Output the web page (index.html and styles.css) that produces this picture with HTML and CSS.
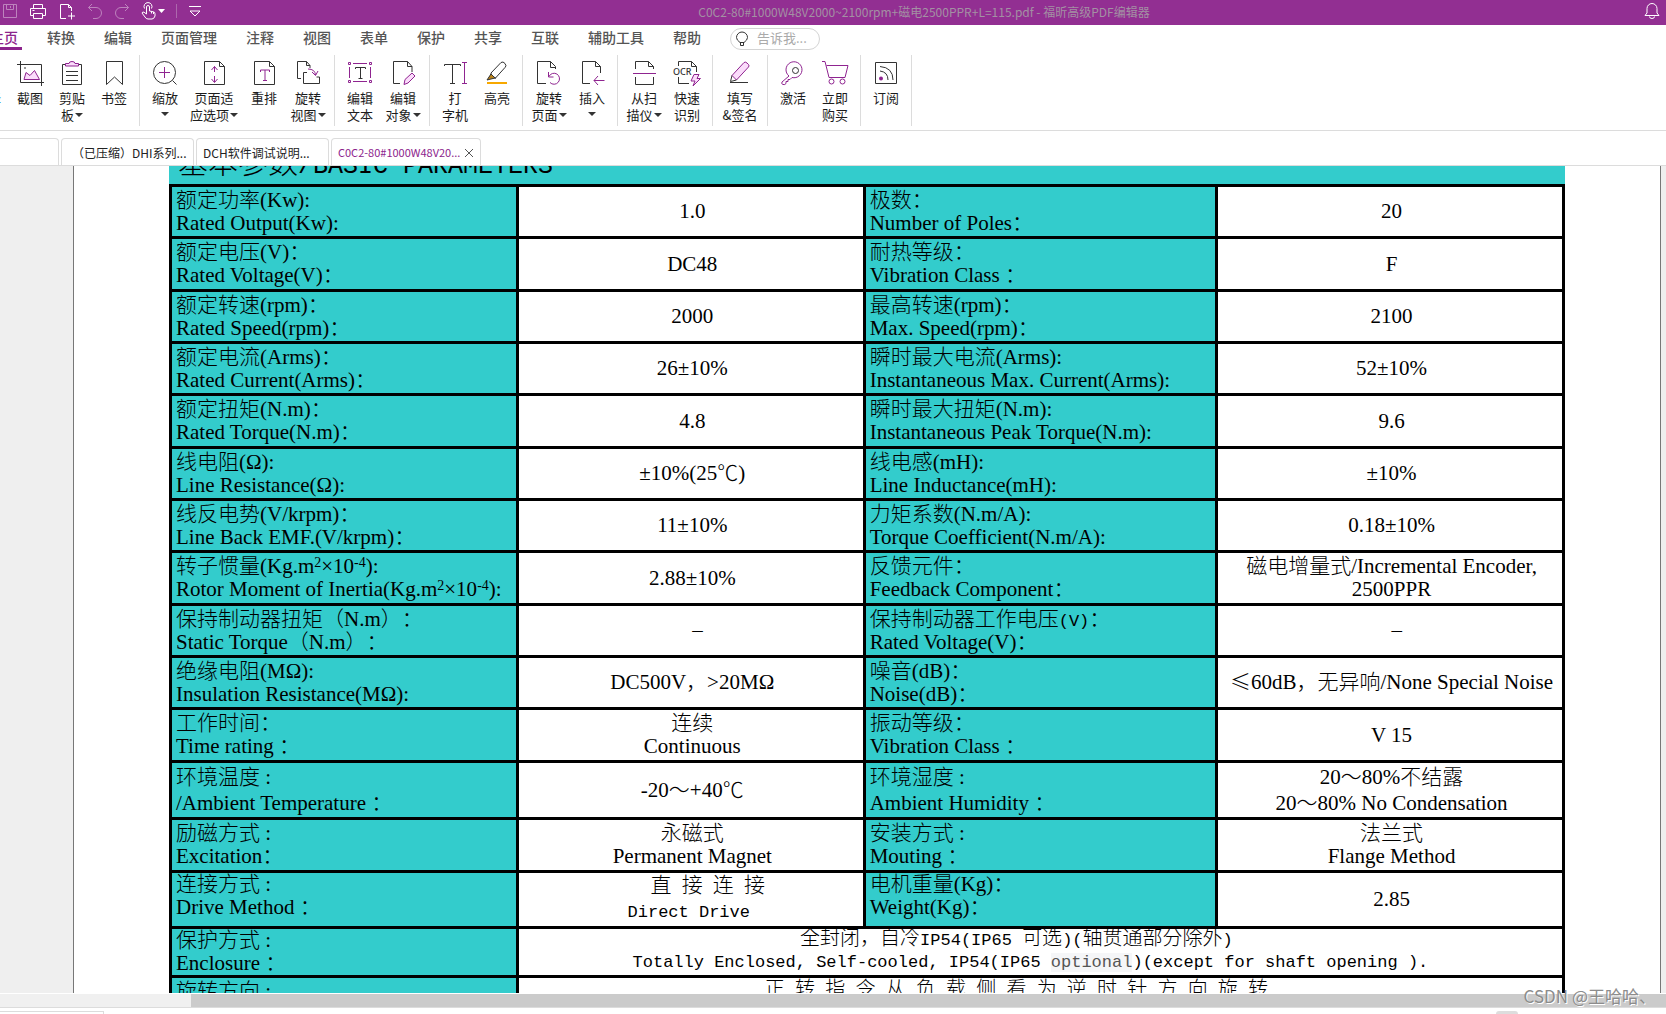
FILE: index.html
```html
<!DOCTYPE html>
<html lang="zh-CN">
<head>
<meta charset="utf-8">
<title>C0C2-80#1000W48V2000~2100rpm+磁电2500PPR+L=115.pdf - 福昕高级PDF编辑器</title>
<link rel="stylesheet" href="styles.css">
</head>
<body>
<header class="titlebar">
  <div class="quick">
    <button class="dim" aria-label="保存"><svg width="16" height="16" viewBox="0 0 16 16"><path d="M1.500 1.500h13v13h-13zM4.500 1.500v5h7v-5M8.500 3v2"/></svg></button>
    <button aria-label="打印"><svg width="18" height="17" viewBox="0 0 18 17"><path d="M4.500 5V1.500h9V5M4.500 12.500h-3V5.500h15v7h-3M4.500 10.500h9v5h-9zM3.500 7.500h2"/></svg></button>
    <button aria-label="新建"><svg width="18" height="17" viewBox="0 0 18 17"><path d="M8 15.500H2.500v-14h8l3 3V8M10.500 1.500v3h3M13.500 9.500v7M10 13h7"/></svg></button>
    <button class="dim" aria-label="撤销"><svg width="16" height="17" viewBox="0 0 16 17"><path d="M5 1L1.500 4.500 5 8M1.500 4.500H9a5 5 0 0 1 0 11H6"/></svg></button>
    <button class="dim" aria-label="重做"><svg width="16" height="17" viewBox="0 0 16 17"><path d="M11 1l3.500 3.500L11 8M14.500 4.500H7a5 5 0 0 0 0 11h3"/></svg></button>
    <button aria-label="手型工具"><svg width="24" height="18" viewBox="0 0 24 18"><path d="M5.500 12V5a1.500 1.500 0 0 1 3 0v4l4 .8q1.500.3 1.500 2V14q-1 3-3 3H7q-2 0-3-2l-3-4q.5-1.500 2-.8L5.500 12M3.500 6.500a4 4 0 1 1 7 0M10.500 9.500v2M12.500 10v2"/><path class="fill" d="M17 7h7l-3.500 4z"/></svg></button>
    <span class="split"></span>
    <button aria-label="自定义"><svg width="14" height="13" viewBox="0 0 14 13"><path d="M1 1.500h12M2 6l5 5 5-5z"/></svg></button>
  </div>
  <h1>C0C2-80#1000W48V2000~2100rpm+磁电2500PPR+L=115.pdf - 福昕高级PDF编辑器</h1>
  <button class="bell" aria-label="通知"><svg width="16" height="17" viewBox="0 0 16 17"><path d="M1 12.500h14l-2-2.500V5.500a5 5 0 0 0-10 0V10zM5.500 13.500a2.500 2 0 0 0 5 0"/></svg></button>
</header>

<nav class="menu">
  <a class="current" href="#">主页</a><a href="#">转换</a><a href="#">编辑</a><a href="#">页面管理</a><a href="#">注释</a><a href="#">视图</a><a href="#">表单</a><a href="#">保护</a><a href="#">共享</a><a href="#">互联</a><a href="#">辅助工具</a><a href="#">帮助</a>
  <label class="search"><svg width="14" height="16" viewBox="0 0 14 16"><path d="M5 11.500Q1.500 9 1.500 6.500a5.500 5.500 0 0 1 11 0Q12.500 9 9 11.500zM5.500 11.500v3h3v-3"/></svg><input type="text" placeholder="告诉我..." aria-label="告诉我"></label>
</nav>

<div class="ribbon">
  <div class="group first">
    <button><svg class="ic"></svg><span class="blue">选择</span></button>
    <button><svg class="ic" viewBox="0 0 28 26"><path d="M1 4.500h24.500V26M4.500 1v21.500H28"/><path class="p f" d="M8 19.500l2-7 4 3 4.500-5 5 9z"/><path d="M8 8h2"/></svg><span>截图</span></button>
    <button><svg class="ic" viewBox="0 0 28 26"><path d="M7 4.500H4.500v20h19v-20H21M8 11.500h12M8 15.500h12M8 20.500h12"/><path class="p f" d="M7.500 6V3.500h3.500q0-2 3-2t3 2h3.500V6z"/></svg><span>剪贴<br>板<i></i></span></button>
    <button><svg class="ic" viewBox="0 0 28 26"><path d="M6.500 1.500h16v23L14.500 17l-8 7.500z"/></svg><span>书签</span></button>
  </div>
  <div class="group">
    <button><svg class="ic" viewBox="0 0 28 26"><circle cx="13.500" cy="12.500" r="11"/><path d="M21.500 20.500l4 4"/><path class="p" d="M8 12.500h11M13.500 7v11"/></svg><span>缩放<br><i class="alone"></i></span></button>
    <button class="w56"><svg class="ic" viewBox="0 0 28 26"><path d="M4.500 1.500h15l5 5v18h-20zM19.500 1.500v5h5"/><path class="p" d="M14.500 12V6.500M11.500 10l3-3.500 3 3.500M14.500 16v6M11.500 19l3 3.500 3-3.500"/></svg><span>页面适<br>应选项<i></i></span></button>
    <button class="w44"><svg class="ic" viewBox="0 0 28 26"><path d="M4.500 1.500h15l5 5v18h-20zM19.500 1.500v5h5"/><path class="p" d="M10.500 12v-2h9v2M15 10v10.500M13 20.500h4"/></svg><span>重排</span></button>
    <button class="w44"><svg class="ic" viewBox="0 0 28 26"><path d="M7 18.500H3.500v-17h9l3.500 4V8M12.500 1.500v4H16M13 12.500H9.500v11h16V17h-3"/><path class="p" d="M14 9q7 0 7.500 6M18 12l3.500 3.500L24 11"/></svg><span>旋转<br>视图<i></i></span></button>
  </div>
  <div class="group">
    <button><svg class="ic" viewBox="0 0 28 26"><path class="p" d="M7 3.500h14M7 21.500h14M3.500 7v11M24.500 7v11M2.500 2.500h2v2h-2zM23.500 2.500h2v2h-2zM2.500 20.500h2v2h-2zM23.500 20.500h2v2h-2z"/><path d="M9.500 9V7.500h10V9M14.500 7.500v11M12.500 18.500h4"/></svg><span>编辑<br>文本</span></button>
    <button class="w44"><svg class="ic" viewBox="0 0 28 26"><path d="M11 23.500H4.500v-22h14l4.500 5V12M18.500 1.500v5H23"/><path class="p f" d="M15 24.500l1-5 7-6.500 3 3-7 7z"/></svg><span>编辑<br>对象<i></i></span></button>
  </div>
  <div class="group">
    <button><svg class="ic" viewBox="0 0 28 26"><path d="M3.500 6V4.500h16V6M11.500 4.500v19M9 23.500h5"/><path class="p" d="M21 2.500h5M21 23.500h5M23.500 2.500v21"/></svg><span>打<br>字机</span></button>
    <button><svg class="ic" viewBox="0 0 28 26"><path d="M8 13L18 2.500q2-1.500 4 1t0 4L12.500 18l-4-1zM7 14l6 4.500"/><path class="gold" d="M4 20l4-6 4 4z"/><path class="under" d="M4 23h20"/></svg><span>高亮</span></button>
  </div>
  <div class="group">
    <button class="w44"><svg class="ic" viewBox="0 0 28 26"><path d="M11 23.500H2.500v-22h13l5 5V9M15.500 1.500v6h5"/><path class="p" d="M13.500 12v5h5M14 16.500a5.500 5.500 0 1 1 1 6"/></svg><span>旋转<br>页面<i></i></span></button>
    <button><svg class="ic" viewBox="0 0 28 26"><path d="M12 23.500H4.500v-22h13l5 5V13M17.500 1.500v5h5"/><path class="p" d="M26.500 20.500H16M20 16l-4 4.500 4 4.500"/></svg><span>插入<br><i class="alone"></i></span></button>
  </div>
  <div class="group">
    <button class="w44"><svg class="ic" viewBox="0 0 28 26"><path d="M5.500 9V1.500h13l5 5V9M18.500 1.500v5h5M5.500 17v7.500h18V17"/><path class="p" d="M3 13.500h23"/></svg><span>从扫<br>描仪<i></i></span></button>
    <button><svg class="ic" viewBox="0 0 28 26"><path d="M5.500 6V1.500h13l5 5V12M18.500 1.500v5h5M5.500 17v6.500H16"/><text x="0" y="15">OCR</text><path class="p f" d="M21 14.500h5l-2 4h3.500L20 26l2-5h-4z"/></svg><span>快速<br>识别</span></button>
  </div>
  <div class="group">
    <button class="w46"><svg class="ic" viewBox="0 0 28 26"><path class="p f" d="M6 15.500L18 2.500q1.500-1 3 .5l1.500 1.500q1 1.500 0 2.500l-12 13z"/><path d="M6 15.500l-1.500 6 6-1.500M4 22.500h18"/></svg><span>填写<br>&amp;签名</span></button>
  </div>
  <div class="group">
    <button><svg class="ic" viewBox="0 0 28 26"><path class="p" d="M10 16L3 22q-1 2 1 2.500t3-1v-2h2v-2h2l2-2a8 8 0 1 0-3-1.500z"/><circle cx="16.500" cy="10.500" r="3"/></svg><span>激活</span></button>
    <button><svg class="ic" viewBox="0 0 28 26"><path class="p" d="M1 1.500h3l4 16h16l3-12H5.500"/><circle class="p" cx="10.500" cy="21.500" r="2.500"/><circle class="p" cx="21.500" cy="21.500" r="2.500"/></svg><span>立即<br>购买</span></button>
  </div>
  <div class="group">
    <button><svg class="ic" viewBox="0 0 28 26"><path d="M3.500 2.500h21v21h-21zM8 6.500q13 1 13 13.500M8 11q8 1 8 9"/><circle class="dot" cx="9" cy="18.500" r="2"/></svg><span>订阅</span></button>
  </div>
</div>

<div class="tabs">
  <a class="tab stub" href="#" aria-label="上一个文档"></a>
  <a class="tab pad" href="#">（已压缩）DHI系列...</a>
  <a class="tab" href="#">DCH软件调试说明...</a>
  <div class="tab active"><a href="#">C0C2-80#1000W48V20...</a><button aria-label="关闭"><svg width="10" height="10" viewBox="0 0 10 10"><path d="M1 1l8 8M9 1L1 9"/></svg></button></div>
</div>

<main class="viewer">
  <article class="page">
    <h2>基本参数<span class="mono">/BASIC PARAMETERS</span></h2>
    <table>
      <colgroup><col class="c1"><col class="c1"><col class="c2"><col class="c1"></colgroup>
      <tbody>
      <tr><th>额定功率(Kw):<br>Rated Output(Kw):</th><td>1.0</td><th>极数：<br>Number of Poles：</th><td>20</td></tr>
      <tr><th>额定电压(V)：<br>Rated Voltage(V)：</th><td>DC48</td><th>耐热等级：<br>Vibration Class ：</th><td>F</td></tr>
      <tr><th>额定转速(rpm)：<br>Rated Speed(rpm)：</th><td>2000</td><th>最高转速(rpm)：<br>Max. Speed(rpm)：</th><td>2100</td></tr>
      <tr><th>额定电流(Arms)：<br>Rated Current(Arms)：</th><td>26±10%</td><th>瞬时最大电流(Arms):<br>Instantaneous Max. Current(Arms):</th><td>52±10%</td></tr>
      <tr><th>额定扭矩(N.m)：<br>Rated Torque(N.m)：</th><td>4.8</td><th>瞬时最大扭矩(N.m):<br>Instantaneous Peak Torque(N.m):</th><td>9.6</td></tr>
      <tr><th>线电阻(Ω):<br>Line Resistance(Ω):</th><td>±10%(25℃)</td><th>线电感(mH):<br>Line Inductance(mH):</th><td>±10%</td></tr>
      <tr><th>线反电势(V/krpm)：<br>Line Back EMF.(V/krpm)：</th><td>11±10%</td><th>力矩系数(N.m/A):<br>Torque Coefficient(N.m/A):</th><td>0.18±10%</td></tr>
      <tr><th>转子惯量(Kg.m<sup>2</sup>×10<sup>-4</sup>):<br>Rotor Moment of Inertia(Kg.m<sup>2</sup>×10<sup>-4</sup>):</th><td>2.88±10%</td><th>反馈元件：<br>Feedback Component：</th><td>磁电增量式/Incremental Encoder,<br>2500PPR</td></tr>
      <tr><th>保持制动器扭矩（N.m）：<br>Static Torque（N.m）：</th><td>&nbsp;&nbsp;–</td><th>保持制动器工作电压<span class="mono">(V)</span>：<br>Rated Voltage(V)：</th><td>&nbsp;&nbsp;–</td></tr>
      <tr><th>绝缘电阻(MΩ):<br>Insulation Resistance(MΩ):</th><td>DC500V，&gt;20MΩ</td><th>噪音(dB)：<br>Noise(dB)：</th><td><b>≤</b>60dB，无异响/None Special Noise</td></tr>
      <tr><th>工作时间：<br>Time rating ：</th><td>连续<br>Continuous</td><th>振动等级：<br>Vibration Class ：</th><td>V 15</td></tr>
      <tr class="loose"><th>环境温度 :<br>/Ambient Temperature ：</th><td>-20～+40℃</td><th>环境湿度 :<br>Ambient Humidity ：</th><td>20～80%不结露<br>20～80% No Condensation</td></tr>
      <tr><th>励磁方式 :<br>Excitation：</th><td>永磁式<br>Permanent Magnet</td><th>安装方式 :<br>Mouting ：</th><td>法兰式<br>Flange Method</td></tr>
      <tr class="drive"><th>连接方式 :<br>Drive Method ：</th><td class="wide"><div class="spaced"><b>直</b> <b>接</b> <b>连</b> <b>接</b></div><div class="mono">Direct Drive</div></td><th>电机重量(Kg)：<br>Weight(Kg)：</th><td>2.85</td></tr>
      <tr class="short"><th>保护方式 :<br>Enclosure ：</th><td class="note" colspan="3"><div class="cn"><b>全封闭，自冷</b>IP54(IP65 <b>可选</b>)(<b>轴贯通部分除外</b>)</div>Totally Enclosed, Self-cooled, IP54(IP65 <span class="faded">optional</span>)(except for shaft opening ).</td></tr>
      <tr><th>旋转方向 :<br>Rotation：</th><td class="note" colspan="3"><div class="cn"><b>正</b> <b>转</b> <b>指</b> <b>令</b> <b>从</b> <b>负</b> <b>载</b> <b>侧</b> <b>看</b> <b>为</b> <b>逆</b> <b>时</b> <b>针</b> <b>方</b> <b>向</b> <b>旋</b> <b>转</b></div>&nbsp;</td></tr>
      </tbody>
    </table>
  </article>
</main>

<footer>
  <div class="scroll"><div class="thumb"></div></div>
  <div class="status"><span class="box"></span><span class="nub"></span></div>
  <div class="watermark">CSDN @王哈哈、</div>
</footer>
</body>
</html>
```
FILE: styles.css
```css
* { box-sizing: border-box; }

body {
  margin: 0;
  height: 100vh;
  display: flex;
  flex-direction: column;
  overflow: hidden;
  background: #fff;
  color: #1c1c1c;
  font: 13px/17px "Noto Sans CJK SC", "Noto Sans", sans-serif;
  text-spacing-trim: space-all;
}

button { border: 0; padding: 0; background: none; font: inherit; color: inherit; }
a { color: inherit; text-decoration: none; }
svg { display: block; fill: none; stroke: currentColor; }

/* title bar */
.titlebar {
  flex: none;
  height: 25px;
  display: grid;
  grid-template-columns: 1fr auto 1fr;
  align-items: center;
  background: #922f92;
  color: #fff;
  padding: 0 6px 3px 2px;
}
.titlebar h1 { margin: 0 0 0 186px; font-size: 12px; font-weight: 400; color: #a391a3; white-space: nowrap; }
.quick { display: flex; align-items: center; gap: 11px; }
.quick .dim { opacity: .4; }
.quick .fill { fill: currentColor; stroke: none; }
.split { width: 1px; height: 14px; background: #ad68ad; }
.bell { justify-self: end; }

/* menu */
.menu { flex: none; height: 29px; display: flex; gap: 29px; margin-left: -10px; font-size: 14px; line-height: 20px; font-weight: 500; color: #555; }
.menu a { flex: none; height: 25px; padding-top: 2px; }
.menu .current { color: #8c238c; border-bottom: 3px solid #8c238c; width: 32px; margin-right: -4px; }
.search { display: flex; align-items: center; gap: 8px; width: 90px; height: 22px; margin-top: 3px; padding: 0 4px; border: 1px solid #d4d4d4; border-radius: 11px; color: #333; }
.search svg { flex: none; }
.search input { width: 56px; border: 0; padding: 0 0 2px; outline: 0; background: none; font: 13px/18px "Noto Sans CJK SC", sans-serif; }
.search input::placeholder { color: #aaa; opacity: 1; }

/* ribbon */
.ribbon { flex: none; height: 77px; display: flex; padding-top: 1px; border-bottom: 1px solid #dcdcdc; }
.group { height: 71px; display: flex; padding: 0 4px; border-right: 1px solid #dcdcdc; }
.group.first { margin-left: -33px; padding-left: 0; }
.group button { width: 42px; display: flex; flex-direction: column; align-items: center; padding-top: 5px; text-align: center; white-space: nowrap; }
.group .w44 { width: 44px; }
.group .w46 { width: 46px; }
.group .w56 { width: 56px; }
.ic { width: 28px; height: 26px; margin-bottom: 3px; overflow: visible; color: #333; }
.ic .p { stroke: #8f2490; }
.ic .f { fill: #fbdcfb; }
.ic .gold { fill: #b98217; }
.ic .under { stroke: #f7a800; stroke-width: 2; }
.ic .dot { fill: #8f2490; stroke: none; }
.ic text { font: 500 9px "Noto Sans", sans-serif; fill: #333; stroke: none; }
.blue { color: #2a8bd6; }
.group i { display: inline-block; border: 4px solid transparent; border-top-color: #333; border-bottom: 0; margin-left: 1px; vertical-align: 3px; }
.group .alone { margin: 0; vertical-align: 4px; }

/* document tabs */
.tabs { flex: none; height: 35px; display: flex; align-items: flex-end; gap: 2px; border-bottom: 1px solid #dcdcdc; }
.tab { width: 133px; height: 27px; padding: 5px 6px 4px; border: 1px solid #dcdcdc; border-bottom: 0; border-radius: 4px 4px 0 0; font-size: 12px; white-space: nowrap; color: #222; }
.tab.stub { width: 63px; margin-left: -4px; }
.tab.pad { padding-left: 10px; }
.tab.active { width: 150px; display: flex; align-items: center; justify-content: space-between; color: #8c238c; font-size: 11px; }
.tab.active button { color: #555; }

/* document */
.viewer { flex: 1; min-height: 0; overflow: hidden; background: #efefef; padding: 0 5px 0 73px; }
.page { border: solid #777; border-width: 0 1px; background: #fff; padding: 0 95px; font: 300 21px/23px "Liberation Serif", "Noto Sans CJK SC", serif; color: #000; }
h2 { margin: -17px 0 0; height: 36px; padding: 0 9px; background: #3cc; font-size: 30px; line-height: 28px; font-weight: 300; white-space: nowrap; overflow: hidden; }
.mono { font-family: "Liberation Mono", monospace; font-size: 17px; }
span.mono { line-height: 1px; }
h2 .mono { font-size: 25px; }
table { width: 100%; margin-top: -1px; table-layout: fixed; border-collapse: collapse; }
.c1 { width: 24.9%; }
.c2 { width: 25.3%; }
tr { height: 52px; }
tr:nth-child(3n+2) { height: 53px; }
tr.loose { height: 57px; line-height: 26px; }
tr.loose + tr { height: 53px; }
tr.drive { height: 56px; }
tr.drive th { vertical-align: top; }
tr.short { height: 49px; }
th, td { border: 3px solid #000; padding: 0; white-space: nowrap; font-weight: 300; text-align: center; }
td { padding-left: 3px; }
th { background: #3cc; text-align: left; padding-left: 4px; }
sup { font-size: 14px; line-height: 0; vertical-align: 6px; }
.wide { padding: 0; line-height: 25px; }
.spaced { padding-left: 34px; font-family: "Liberation Mono", monospace; font-size: 17px; }
div.mono { padding-right: 4px; }
b { font: 300 20px/1px "Noto Sans CJK SC", sans-serif; }
.spaced b, td:last-child:not(.note) b { font-size: 21px; }
.note { padding: 0 20px 0 0; font-family: "Liberation Mono", monospace; font-size: 17px; line-height: 22px; }
.cn { padding-right: 28px; }
.faded { color: #555; background: #f5f6f8; }

/* bottom */
footer { flex: none; position: relative; }
.scroll { height: 14px; margin-top: 1px; background: #f0f0f0; border-bottom: 1px solid #dcdcdc; padding-left: 191px; }
.thumb { height: 13px; background: #cbcbcb; }
.status { height: 6px; display: flex; justify-content: space-between; align-items: flex-end; padding-right: 148px; }
.box { width: 104px; height: 3px; border: 1px solid #dcdcdc; border-width: 1px 1px 0 0; }
.nub { width: 22px; height: 3px; border-radius: 3px 3px 0 0; background: #ddd; }
.watermark { position: absolute; right: 10px; bottom: 8px; font-size: 17px; line-height: 20px; color: #8c8c8c; text-shadow: 1px 1px 0 #fff; }
```
